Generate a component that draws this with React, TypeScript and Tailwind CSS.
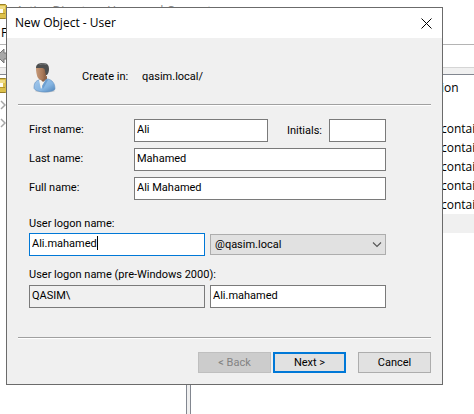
import type { ReactNode } from "react";

const shell = "font-[Roboto,'Liberation_Sans',sans-serif]";
const field =
  "block h-[23px] w-full min-w-0 border border-[#7a7a7a] bg-white px-[2px] pb-[3px] outline-none";

function Folder() {
  return (
    <svg width="16" height="15" viewBox="0 0 16 15" className="-ml-[9px] shrink-0">
      <path d="M0 .5h14.500l1 1v12l-1 1H0z" fill="#dcc04c" stroke="#9a8128" />
      <path d="M0 2h14v3H0z" fill="#f0dc85" />
      <path d="M0 5h12v4H0z" fill="#fffdf0" />
      <path d="M0 9h14v1H0z" fill="#b4952c" />
    </svg>
  );
}

function Expander() {
  return (
    <svg width="6" height="10" viewBox="0 0 6 10" className="shrink-0">
      <path d="M1 1l4 4-4 4" fill="none" stroke="#a6a6a6" strokeWidth="1.5" />
    </svg>
  );
}

function Person() {
  return (
    <svg width="24" height="32" viewBox="0 0 24 32" className="shrink-0">
      <defs>
        <linearGradient id="shirt" x1="0" y1="0" x2="1" y2="1">
          <stop offset="0" stopColor="#a5c9ec" />
          <stop offset="0.6" stopColor="#85b5e2" />
          <stop offset="1" stopColor="#4f83b8" />
        </linearGradient>
        <linearGradient id="skin" x1="0" y1="0" x2="1" y2="0">
          <stop offset="0" stopColor="#c79a79" />
          <stop offset="0.6" stopColor="#a87858" />
          <stop offset="1" stopColor="#7a543c" />
        </linearGradient>
      </defs>
      <ellipse cx="12" cy="30" rx="10" ry="1.500" fill="#c8cacc" />
      <path
        d="M1 27c0-4 1-7 5-8l3-1h6c4 1 7 4 7 10 0 1-4 3-10 3S1 29 1 27z"
        fill="url(#shirt)"
        stroke="#5f8fc0"
        strokeWidth=".6"
      />
      <path d="M6 19l3-1h4l-2 5-3 5z" fill="#f6f3ee" />
      <path d="M8 16l6-1v3l-4 3-2-2z" fill="#8f654a" />
      <path d="M13 18l2 1-5 9-1-3z" fill="#6d9fd0" />
      <path d="M3 7c0-3 11-3 11 2 0 5-2 10-6 10-3 0-5-5-5-12z" fill="url(#skin)" />
      <path
        d="M3 7c0-4 3-5 7-5 5 0 6 3 6 6 0 3-1 5-2 6h-1l-1-4c0-3-2-3-4-3-3 0-4 0-5 0z"
        fill="#4d4f50"
      />
      <path d="M6 4c2-2 6-2 8 0-3-1-5-1-8 0z" fill="#858788" />
    </svg>
  );
}

function Rule() {
  return <div className="mx-[11px] h-[2px] border-t border-[#a0a0a0] bg-white" />;
}

function Row({ id, label, children }: { id: string; label: string; children: ReactNode }) {
  return (
    <div className="flex items-start">
      <label htmlFor={id} className="w-[105px] shrink-0 pt-1">
        {label}
      </label>
      <div className="flex min-w-0 flex-1">{children}</div>
    </div>
  );
}

function Console() {
  return (
    <div className="flex h-screen flex-col overflow-hidden bg-white font-['Open_Sans','Noto_Sans',sans-serif] text-xs leading-4 text-black">
      <div className="flex h-[22px] items-center gap-[9px] text-[#8a8a8a]">
        <Folder />
        Active Directory Users and Computers
      </div>
      <div className="flex h-[22px] items-center pl-px">F</div>
      <div className="flex h-[23px] items-center border-t border-[#b4b4b4]">
        <svg width="11" height="16" viewBox="0 0 11 16" className="-ml-1">
          <path d="M1 8l7-7v4h4v6H8v4z" fill="#a8a8a8" stroke="#777777" />
        </svg>
      </div>
      <div className="h-[7px] border-t border-[#d5d5d5] bg-[#f0f0f0]" />
      <div className="flex flex-1 border-t border-[#828790]">
        <div className="flex w-[187px] shrink-0 flex-col gap-[7px] border-r border-[#828790] pt-[3px]">
          <Folder />
          <div className="flex flex-col gap-2">
            <Expander />
            <Expander />
          </div>
        </div>
        <div className="w-[3px] shrink-0 bg-[#f0f0f0]" />
        <div className="min-w-0 flex-1 border-l border-[#828790]">
          <div className="h-[44px] pl-[250px] pt-[5px]">ion</div>
          {[1, 2, 3, 4, 5].map((n) => (
            <div key={n} className="h-[19px] overflow-hidden pl-[250px] pt-[2px]">
              container
            </div>
          ))}
          <div className="h-[19px] bg-[#f0f0f0]" />
        </div>
      </div>
    </div>
  );
}

export default function App() {
  return (
    <main className="relative h-screen overflow-hidden">
      <Console />
      <form
        role="dialog"
        aria-labelledby="title"
        onSubmit={(e) => e.preventDefault()}
        className={`absolute left-[6px] right-[31px] top-[7px] border border-[#6b6b6b] bg-[#f0f0f0] text-[11px] leading-[14px] text-black ${shell}`}
      >
        <header className="flex h-[30px] items-center justify-between bg-white pl-2 pr-[10px]">
          <h1 id="title" className="font-['Open_Sans','Noto_Sans',sans-serif] text-xs leading-4">
            New Object - User
          </h1>
          <button type="button" aria-label="Close">
            <svg width="11" height="11" viewBox="0 0 11 11">
              <path d="M.5.5l10 10M10.500.5l-10 10" stroke="#000" strokeWidth="1" />
            </svg>
          </button>
        </header>

        <div className="flex h-[66px] items-center pl-[26px] pt-3">
          <Person />
          <span className="ml-[25px] w-[60px]">Create in:</span>
          <span>qasim.local/</span>
        </div>
        <Rule />

        <div className="flex flex-col pb-[29px] pl-[22px] pr-[56px] pt-[13px]">
          <div className="flex flex-col gap-[6px]">
            <Row id="first" label="First name:">
              <input id="first" className={field} defaultValue="Ali" />
              <label htmlFor="initials" className="ml-[19px] w-[42px] shrink-0 pt-[5px]">
                Initials:
              </label>
              <div className="w-[57px] shrink-0">
                <input id="initials" className={field} />
              </div>
            </Row>
            <Row id="last" label="Last name:">
              <input id="last" className={field} defaultValue="Mahamed" />
            </Row>
            <Row id="full" label="Full name:">
              <input id="full" className={field} defaultValue="Ali Mahamed" />
            </Row>
          </div>

          <label htmlFor="logon" className="mt-[17px] pb-[2px]">
            User logon name:
          </label>
          <div className="flex items-center gap-[5px]">
            <div className="relative w-[176px] shrink-0">
              <input
                id="logon"
                className="block h-[23px] w-full border border-[#0078d7] bg-white px-[2px] pb-[3px] outline-none"
                defaultValue="Ali.mahamed"
              />
              <span className="absolute left-[68px] top-[3px] h-[14px] w-px bg-black" />
            </div>
            <div className="relative min-w-0 flex-1">
              <select
                aria-label="Domain suffix"
                className="block h-[21px] w-full appearance-none border border-[#adadad] bg-[#e1e1e1] px-1 outline-none"
              >
                <option>@qasim.local</option>
              </select>
              <svg
                width="10"
                height="6"
                viewBox="0 0 10 6"
                className="pointer-events-none absolute right-1 top-2"
              >
                <path d="M1 .5l4 4 4-4" fill="none" stroke="#555" strokeWidth="1.1" />
              </svg>
            </div>
          </div>

          <label htmlFor="pre2000" className="mt-3 pb-[3px]">
            User logon name (pre-Windows 2000):
          </label>
          <div className="flex gap-[5px]">
            <div className="w-[176px] shrink-0">
              <input
                aria-label="Domain"
                readOnly
                className="block h-[23px] w-full border border-[#7a7a7a] bg-[#f0f0f0] px-[2px] pb-[3px] outline-none"
                defaultValue={"QASIM\\"}
              />
            </div>
            <input id="pre2000" className={field} defaultValue="Ali.mahamed" />
          </div>
        </div>
        <Rule />

        <footer className="flex justify-end pb-[11px] pr-[11px] pt-[13px]">
          <button
            type="button"
            disabled
            className="h-[21px] w-[73px] border border-[#bfbfbf] bg-[#cccccc] text-[#838383]"
          >
            &lt; Back
          </button>
          <button
            type="submit"
            className="ml-[2px] h-[21px] w-[73px] border-2 border-[#0078d7] bg-[#e1e1e1]"
          >
            Next &gt;
          </button>
          <button
            type="button"
            className="ml-3 h-[21px] w-[73px] border border-[#adadad] bg-[#e1e1e1]"
          >
            Cancel
          </button>
        </footer>
      </form>
    </main>
  );
}
